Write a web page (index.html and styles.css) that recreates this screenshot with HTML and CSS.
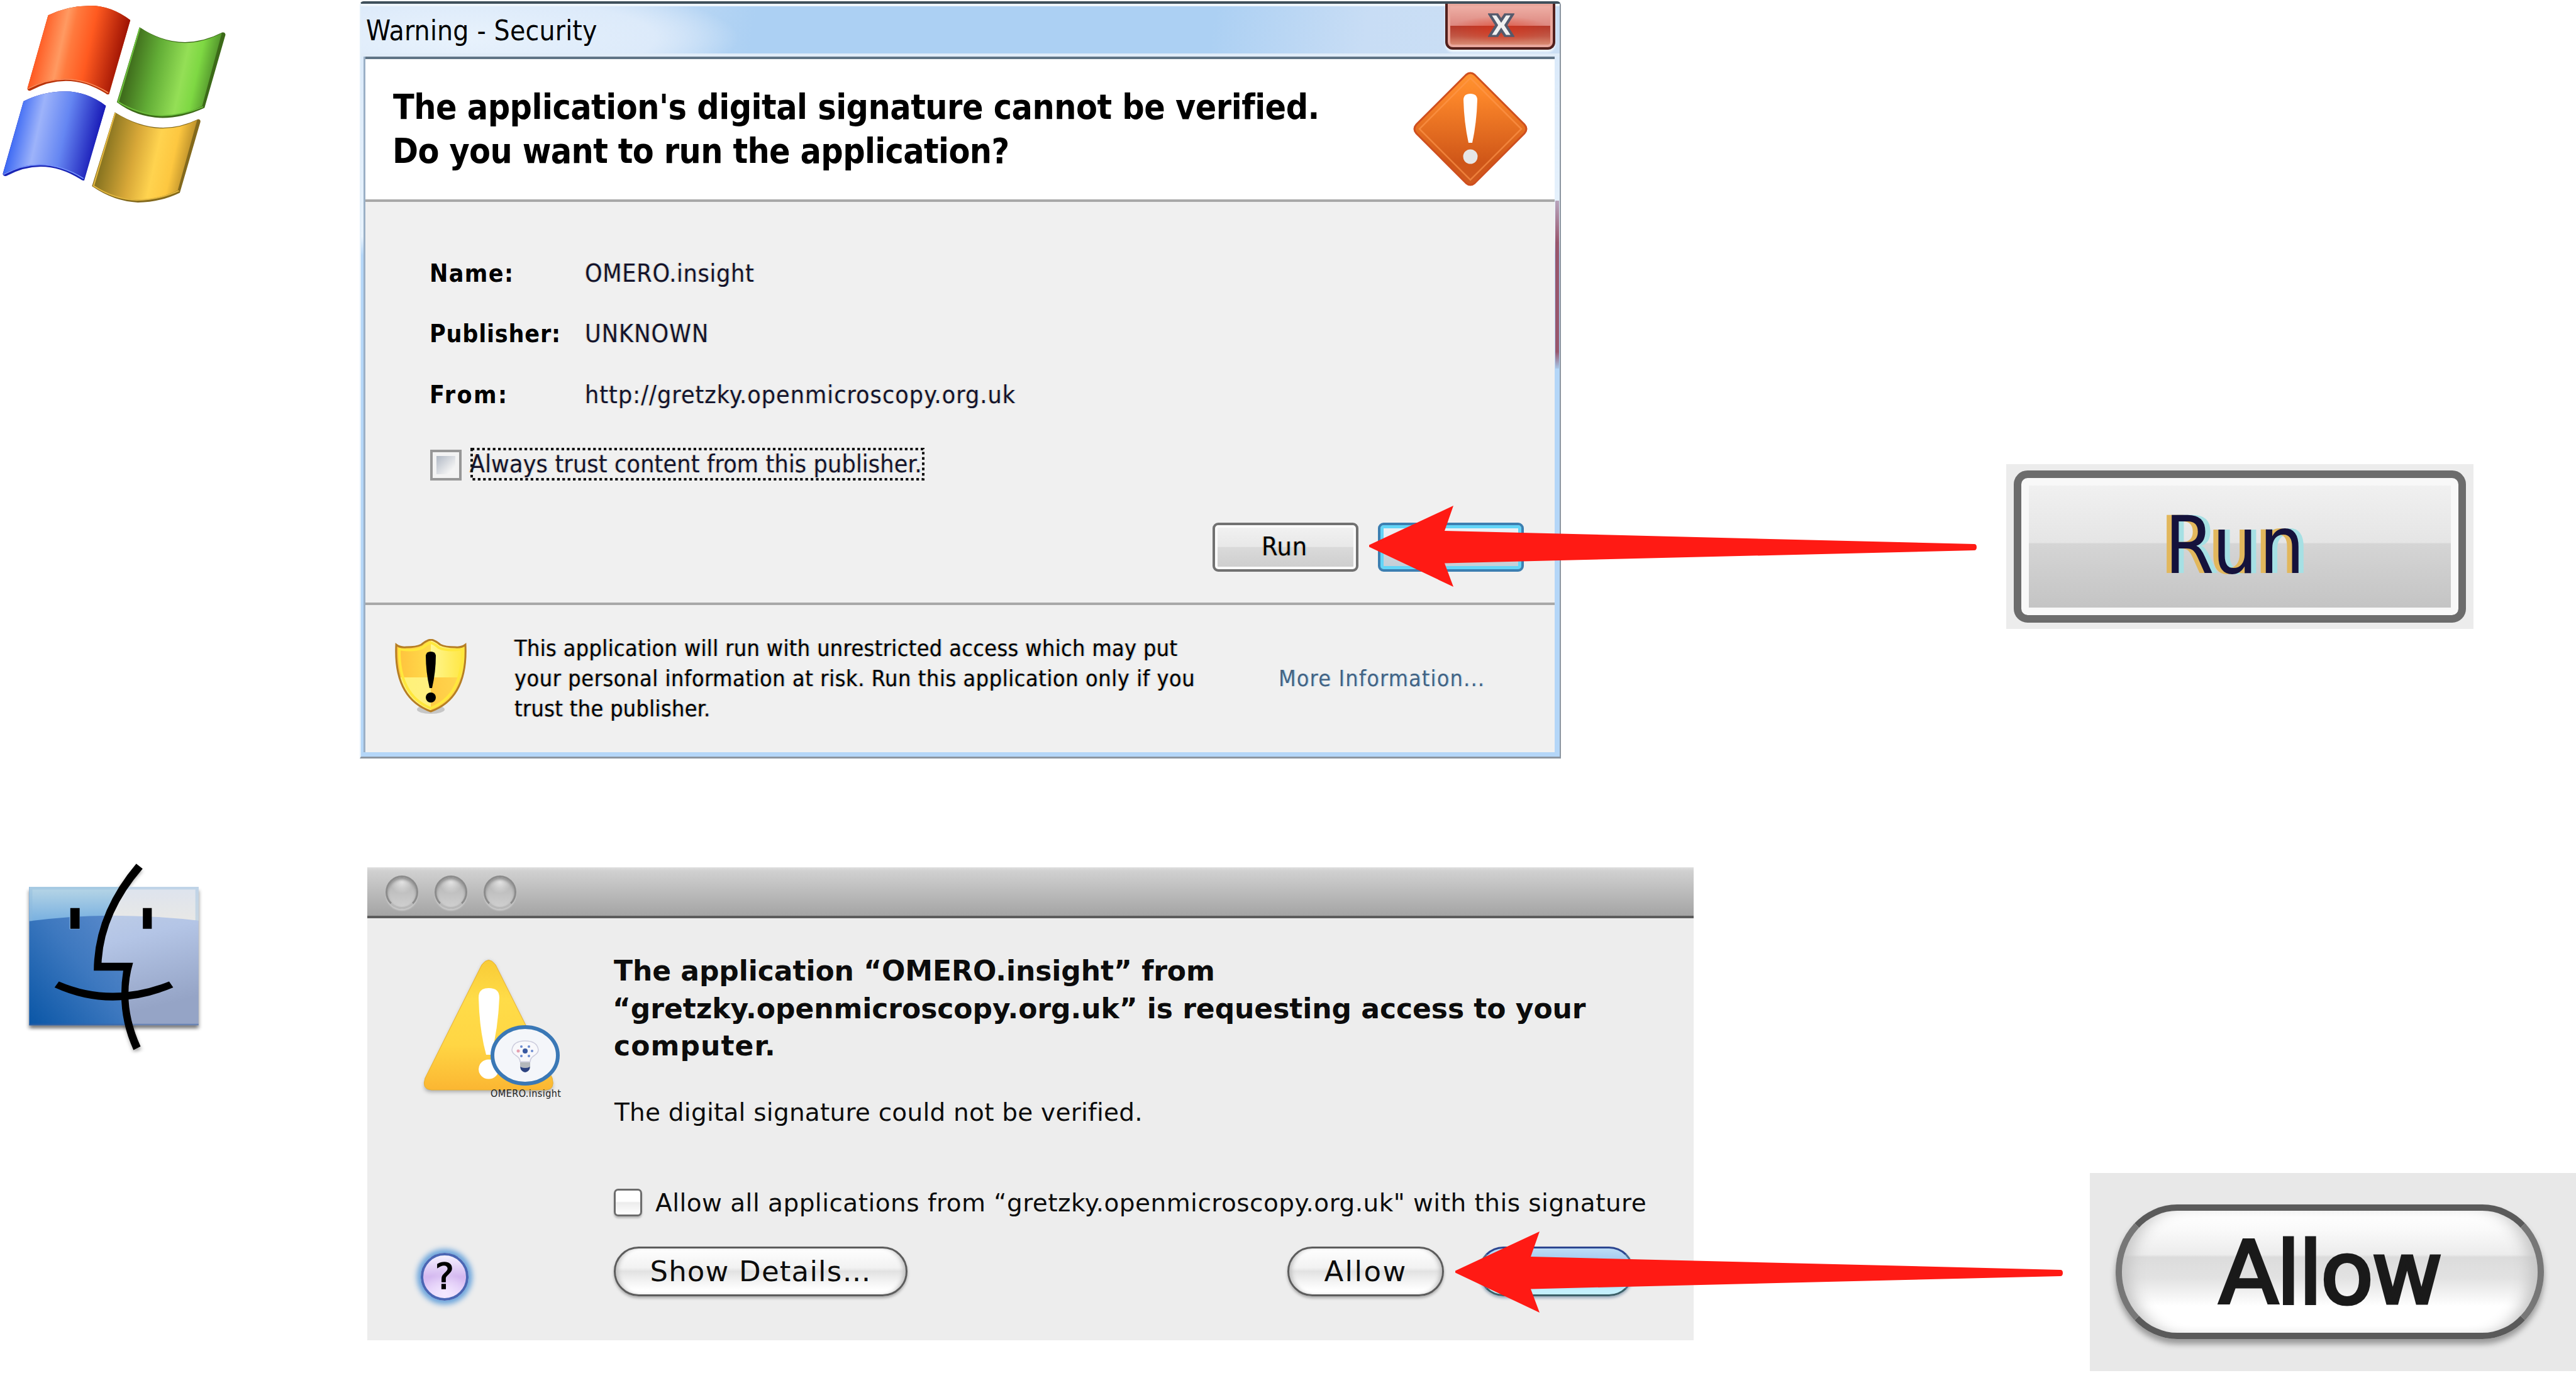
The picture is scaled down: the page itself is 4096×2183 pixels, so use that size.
FILE: index.html
```html
<!DOCTYPE html>
<html lang="en">
<head>
<meta charset="utf-8">
<title>Security warnings</title>
<link rel="stylesheet" href="styles.css">
</head>
<body>
<section class="platform platform-win">
  <svg class="logo-win" viewBox="0 0 1568 1200" preserveAspectRatio="none">
    <defs>
      <linearGradient id="red" gradientUnits="userSpaceOnUse" x1="165" y1="250" x2="530" y2="315">
        <stop offset="0" stop-color="#ff5a22"/><stop offset=".27" stop-color="#ff9a62"/><stop offset=".38" stop-color="#ff7a3e"/><stop offset=".6" stop-color="#ff5a20"/><stop offset="1" stop-color="#a01404"/>
      </linearGradient>
      <linearGradient id="green" gradientUnits="userSpaceOnUse" x1="565" y1="350" x2="945" y2="418">
        <stop offset="0" stop-color="#3f6d1c"/><stop offset=".3" stop-color="#62ad36"/><stop offset=".62" stop-color="#94df56"/><stop offset=".78" stop-color="#7ed843"/><stop offset="1" stop-color="#4b8a28"/>
      </linearGradient>
      <linearGradient id="blue" gradientUnits="userSpaceOnUse" x1="55" y1="700" x2="425" y2="766">
        <stop offset="0" stop-color="#3b68f4"/><stop offset=".29" stop-color="#9db3fa"/><stop offset=".6" stop-color="#6586f2"/><stop offset="1" stop-color="#1a1cb8"/>
      </linearGradient>
      <linearGradient id="gold" gradientUnits="userSpaceOnUse" x1="455" y1="800" x2="835" y2="868">
        <stop offset="0" stop-color="#887420"/><stop offset=".35" stop-color="#d8a838"/><stop offset=".6" stop-color="#ffd34f"/><stop offset=".8" stop-color="#fdc740"/><stop offset="1" stop-color="#b58a28"/>
      </linearGradient>
    </defs>
    <path d="M211 82Q295 32 385 31Q480 25 571 108L478 505Q470 510 462 500Q300 375 132 486Q120 488 120 474Z" fill="#b83208"/>
    <path d="M211 82Q295 32 385 31Q480 25 571 108L478 496Q300 362 120 474Z" fill="url(#red)" />
    <path d="M122 476Q300 364 474 497" fill="none" stroke="#ff8e5c" stroke-width="5"/>
    <path d="M611 146Q790 290 974 174Q986 170 988 186L896 578Q800 632 712 632Q600 630 512 548Z" fill="#3c6a18"/>
    <path d="M617 150Q790 295 972 177L886 568Q800 620 712 620Q610 615 520 540Z" fill="url(#green)"/>
    <path d="M613 150L518 546Q610 615 712 620Q800 618 890 572" fill="none" stroke="#6cbf3c" stroke-width="6"/>
    <path d="M103 543Q190 490 285 490Q380 490 464 567L369 967Q362 970 352 960Q190 835 28 943Q14 946 12 932Z" fill="#1a25b4"/>
    <path d="M103 543Q190 490 285 490Q380 490 464 567L369 955Q190 820 13 932Z" fill="url(#blue)"/>
    <path d="M15 935Q190 822 366 957" fill="none" stroke="#7a98ff" stroke-width="5"/>
    <path d="M503 602Q690 745 868 639Q880 640 878 654L788 1033Q700 1085 604 1085Q500 1080 403 998Z" fill="#83691c"/>
    <path d="M509 607Q690 750 864 643L779 1020Q700 1068 600 1071Q500 1068 412 992Z" fill="url(#gold)"/>
    <path d="M505 606L410 996Q500 1068 600 1073Q700 1070 784 1022" fill="none" stroke="#e2b740" stroke-width="6"/>
  </svg>

  <div class="win-dialog">
    <header class="win-title"><span>Warning - Security</span>
      <div class="win-close"><svg viewBox="0 0 46 60" preserveAspectRatio="none"><path d="M3 3H16L23 18L30 3H43L31 30L43 57H30L23 42L16 57H3L15 30Z" fill="#f0f0f0" stroke="#545a6c" stroke-width="5"/></svg></div>
    </header>
    <div class="win-client">
      <div class="win-head">
        <h1><span class="h-a">The application's digital signature cannot be verified.</span><br><span class="h-b">Do you want to run the application?</span></h1>
        <svg class="diamond" viewBox="0 0 180 180">
          <defs><linearGradient id="or" x2="0" y2="1"><stop offset="0" stop-color="#ff9430"/><stop offset=".2" stop-color="#fb862a"/><stop offset=".8" stop-color="#cf5618"/><stop offset="1" stop-color="#d05a20"/></linearGradient></defs>
          <path d="M83 4Q90-2 97 4L176 83Q182 90 176 97L97 176Q90 182 83 176L4 97Q-2 90 4 83Z" fill="url(#or)" stroke="#cf4f1e" stroke-width="3"/>
          <path d="M90 9L171 90L90 171L9 90Z" fill="none" stroke="#ff9a50" stroke-opacity=".6" stroke-width="2.5"/>
          <path d="M79 44Q79 34 90 34Q101 34 101 44Q100 80 93 112H87Q80 80 79 44Z" fill="#fff"/>
          <circle cx="90" cy="134" r="11.500" fill="#e6e6e6"/>
        </svg>
      </div>
      <div class="win-body">
        <dl>
          <dt class="t-name">Name:</dt><dd class="t-omero">OMERO.insight</dd>
          <dt class="t-pub">Publisher:</dt><dd class="t-unk">UNKNOWN</dd>
          <dt class="t-from">From:</dt><dd class="t-url">http://gretzky.openmicroscopy.org.uk</dd>
        </dl>
        <div class="win-trust"><i class="win-check"></i><span class="focus">Always trust content from this publisher.
          <svg viewBox="0 0 722 52"><rect x="2" y="2" width="718" height="48" fill="none" stroke="#111" stroke-width="4" stroke-dasharray="4.200 4.200"/></svg></span></div>
        <div class="win-buttons"><div class="win-btn">Run</div><div class="win-btn win-default"></div></div>
      </div>
      <div class="win-foot">
        <svg class="shield" viewBox="0 0 114 120">
          <defs><linearGradient id="sh" x2="1"><stop offset="0" stop-color="#ffc03c"/><stop offset=".5" stop-color="#ffdc4c"/><stop offset=".5" stop-color="#fff690"/><stop offset="1" stop-color="#ffe53c"/></linearGradient>
          <linearGradient id="sl" x2="1"><stop offset="0" stop-color="#fff276"/><stop offset=".5" stop-color="#fff080"/><stop offset=".5" stop-color="#ffca44"/><stop offset="1" stop-color="#ffd850"/></linearGradient>
          <clipPath id="sc"><path d="M2 9Q8 14 18 13Q34 13 42 9Q50 2 57 1Q64 2 72 9Q80 13 96 13Q106 14 112 9Q116 94 57 115Q-2 94 2 9Z"/></clipPath></defs>
          <ellipse cx="57" cy="112" rx="22" ry="7" fill="#aaa" opacity=".6"/>
          <g clip-path="url(#sc)"><path d="M0 0H114V61H0Z" fill="url(#sh)"/><path d="M0 61H114V120H0Z" fill="url(#sl)"/></g>
          <path d="M7 16Q30 20 44 14Q52 7 57 6Q62 7 70 14Q84 20 107 16Q108 90 57 110Q6 90 7 16Z" fill="none" stroke="#ffe83c" stroke-width="4"/>
          <path d="M2 9Q8 14 18 13Q34 13 42 9Q50 2 57 1Q64 2 72 9Q80 13 96 13Q106 14 112 9Q116 94 57 115Q-2 94 2 9Z" fill="none" stroke="#b67e24" stroke-width="3"/>
          <path d="M49 26Q50 20 57 20Q64 20 65 26Q65 52 59 78H55Q49 52 49 26Z"/><circle cx="57" cy="93" r="8"/>
        </svg>
        <p><span class="f-a">This application will run with unrestricted access which may put</span><br><span class="f-b">your personal information at risk. Run this application only if you</span><br><span class="f-c">trust the publisher.</span></p>
        <a>More Information...</a>
      </div>
    </div>
  </div>

  <div class="zoom-run"><div class="big-btn">Run</div></div>
  <svg class="arrow arrow-run" viewBox="0 0 968 130"><path d="M134 0L120 40L962 61Q966 61 966 66Q966 71 962 71L120 91.500L134 129L0 65.500V62.500Z" fill="#ff1a14"/></svg>
</section>

<section class="platform platform-mac">
  <svg class="logo-mac" viewBox="0 0 1568 1260" preserveAspectRatio="none">
    <defs>
      <linearGradient id="fl" x1=".9" y1="0" x2="0" y2="1"><stop offset="0" stop-color="#6490cf"/><stop offset=".5" stop-color="#3d78bf"/><stop offset="1" stop-color="#0a56a6"/></linearGradient>
      <linearGradient id="fr" x1="0" y1="0" x2=".3" y2="1"><stop offset="0" stop-color="#c8d6e8"/><stop offset=".5" stop-color="#b4c5e6"/><stop offset="1" stop-color="#95a4c6"/></linearGradient>
      <linearGradient id="gl" x2="0" y2="1"><stop offset="0" stop-color="#b8d6e6"/><stop offset="1" stop-color="#78b0e0"/></linearGradient>
      <linearGradient id="gr" x2="0" y2="1"><stop offset="0" stop-color="#dde3ee"/><stop offset="1" stop-color="#e8e8e6"/></linearGradient>
      <filter id="sb" x="-20%" y="-20%" width="140%" height="140%"><feGaussianBlur stdDeviation="9"/></filter>
    </defs>
    <path d="M128 275H870V1015H128Z" fill="#000" opacity=".5" filter="url(#sb)"/>
    <path d="M610 162Q430 390 430 684H562Q520 900 602 1135" fill="none" stroke="#000" stroke-opacity=".35" stroke-width="34" filter="url(#sb)"/>
    <path d="M128 256H870V998H128Z" fill="url(#fr)"/>
    <path d="M128 256H540Q430 440 430 684H562Q535 840 552 998H128Z" fill="url(#fl)"/>
    <path d="M540 256H870V437Q680 410 470 410Z" fill="url(#gr)"/>
    <path d="M128 256H540L480 410Q300 412 128 440Z" fill="url(#gl)"/>
    <path d="M135 440V263H863V437" fill="none" stroke="#8ab8dc" stroke-opacity=".35" stroke-width="14"/>
    <path d="M128 994H870" stroke="#3f64a0" stroke-opacity=".5" stroke-width="8"/>
    <path d="M305 370H350V483H305Z" fill="#8fc0f0"/><path d="M308 370H349V481H308ZM626 370H665V481H626Z"/>
    <path d="M597 132L625 159Q455 400 445 663H583Q530 880 616 1111L585 1130Q510 930 540 705H411Q412 400 597 132Z"/>
    <path d="M258 763Q490 885 741 763L759 795Q490 935 239 795Z"/>
  </svg>

  <div class="mac-dialog">
    <header class="mac-title"><i></i><i></i><i></i></header>
    <div class="mac-body">
      <div class="mac-side">
        <svg class="warn" viewBox="0 0 245 240">
          <defs><linearGradient id="tr" x2="0" y2="1"><stop offset="0" stop-color="#f8cb36"/><stop offset=".3" stop-color="#ffdc48"/><stop offset=".65" stop-color="#ffd644"/><stop offset="1" stop-color="#fbb632"/></linearGradient>
          <filter id="ts"><feGaussianBlur stdDeviation="3"/></filter></defs>
          <path d="M109 20Q119 4 129 20L219 202Q225 220 210 220H28Q12 220 19 202Z" fill="#777" opacity=".6" filter="url(#ts)"/>
          <path d="M108 18Q119 3 130 18L220 198Q225 216 210 217H28Q12 216 18 198Z" fill="url(#tr)" stroke="#e8b030" stroke-width="1"/>
          <path d="M103 70Q103 55 119 55Q136 55 136 70Q134 120 123 161H115Q104 120 103 70Z" fill="#fff"/><ellipse cx="119" cy="184" rx="16" ry="15.500" fill="#fff"/>
          <ellipse cx="177" cy="162" rx="52" ry="45" fill="#f4f6fa" stroke="#3a78b6" stroke-width="6"/>
          <path d="M169 172Q169 166 162 162Q156 158 156 153Q158 139 177 139Q196 139 198 153Q198 158 192 162Q185 166 185 172Z" fill="#f8f8fb" stroke="#ccd" stroke-width="1.500"/>
          <path d="M169 173H185V180Q177 184 169 180Z" fill="#b4b8bc"/><path d="M169 180Q177 184 185 180Q184 188 177 189Q170 188 169 180Z" fill="#2d4380"/>
          <circle cx="177" cy="155" r="4" fill="#3858a0"/><g fill="#6c8cd0"><circle cx="171" cy="148" r="2"/><circle cx="183" cy="148" r="2"/><circle cx="188" cy="155" r="2"/><circle cx="171" cy="163" r="2"/><circle cx="183" cy="163" r="2"/></g><circle cx="166" cy="155" r="2.500" fill="#e6a0b0"/>
          <text x="122" y="228" textLength="112" lengthAdjust="spacing" class="warn-label">OMERO.insight</text>
        </svg>
        <div class="help">?</div>
      </div>
      <div class="mac-main">
        <h2><span class="m-a">The application “OMERO.insight” from</span><br><span class="m-b">“gretzky.openmicroscopy.org.uk” is requesting access to your</span><br><span class="m-c">computer.</span></h2>
        <p>The digital signature could not be verified.</p>
        <div class="mac-allow"><i></i><span>Allow all applications from “gretzky.openmicroscopy.org.uk" with this signature</span></div>
        <div class="mac-buttons"><div class="mac-btn details">Show Details…</div><div class="mac-btn allow">Allow</div><div class="mac-btn deny">Deny</div></div>
      </div>
    </div>
  </div>

  <div class="zoom-allow"><div class="big-pill">Allow</div></div>
  <svg class="arrow arrow-allow" viewBox="0 0 968 130"><path d="M134 0L120 40L962 61Q966 61 966 66Q966 71 962 71L120 91.500L134 129L0 65.500V62.500Z" fill="#ff1a14"/></svg>
</section>
</body>
</html>
```
FILE: styles.css
```css
* { box-sizing: border-box; }
body { margin: 0; width: 4096px; height: 2183px; overflow: hidden; background: #fff; color: #000; }
h1, h2, p, dl, dd { margin: 0; }
.platform { position: relative; display: flex; align-items: flex-start; }
.platform-win { height: 1334px; font-family: "DejaVu Sans Condensed", "DejaVu Sans", sans-serif; font-stretch: condensed; }
.platform-mac { height: 849px; font-family: "DejaVu Sans", sans-serif; }
.logo-win { width: 569px; height: 356px; flex: none; }
.logo-mac { width: 569px; height: 374px; flex: none; }
.arrow { position: absolute; width: 968px; height: 130px; }
.arrow-run { left: 2177px; top: 804px; }
.arrow-allow { left: 2314px; top: 624px; }

/* Windows dialog */
.win-dialog { flex: none; width: 1910px; height: 1204px; margin: 2px 0 0 3px; padding: 0 7px 7px 6px; display: flex; flex-direction: column; border: 2px solid #8b95a0; border-top: 4px solid #3f505c; border-bottom-width: 3px; border-left-color: #e4f0fa;
  border-radius: 6px 6px 0 0; background: linear-gradient(#cfe2f6 0, #dbeafa 80px, #e8f3fd 370px, #b4d6f8 400px, #b4d6f8 100%); }
.win-title { position: relative; height: 84px; margin: 0 -7px 0 -6px; flex: none; border-bottom: 5px solid #e0ecf8; border-top: 4px solid #eef5fb;
  background: radial-gradient(ellipse 440px 90px at 160px 50px, #e8f2fc 0, #dceafa 70%, transparent 100%), linear-gradient(100deg, #cfe3f7 0, #c6ddf5 400px, #acd0f3 620px, #acd0f3 1340px, #c8ddf5 1580px, #cbdff4 100%); }
.win-title span { display: block; padding-left: 8px; font-size: 44px; line-height: 82px; margin-top: -2px; letter-spacing: .180px; white-space: nowrap; }
.win-close { position: absolute; right: 7px; top: -4px; width: 175px; height: 73px; border: 4px solid #52201c; border-top: 0; border-radius: 0 0 12px 12px; box-shadow: inset 0 0 0 4px #e9a79c, 0 4px 3px #edf5fc; display: flex; justify-content: center; padding: 15px 0 0 3px;
  background: radial-gradient(ellipse 80px 22px at 50% 60%, rgba(225,50,20,.6), transparent), linear-gradient(#f0b4aa 0, #dd8880 50%, #b43a2c 51%, #c25846 75%, #e09a80 100%); }
.win-close svg { width: 42px; height: 38px; }
.win-client { flex: 1; width: 1891px; margin-left: 1px; border-top: 4px solid #5f7486; box-shadow: -3px 0 #9bb0c6; display: flex; flex-direction: column; background: #f0f0f0; position: relative; }
.win-client::after { content: ""; position: absolute; right: -7px; top: 225px; width: 6px; height: 267px; background: linear-gradient(#b8a4bc, #98566c 25%, #98566c 90%, #a8c8e8); }
.win-head { height: 223px; flex: none; background: #fff; padding: 41px 44px 0; display: flex; justify-content: space-between; }
.win-head h1 { font-size: 55px; line-height: 70.400px; font-weight: bold; white-space: nowrap; }
.h-a { letter-spacing: -.500px; }
.h-b { letter-spacing: -.620px; margin-left: -1px; }
.diamond { width: 180px; height: 180px; margin-top: -20px; overflow: visible; }
.win-body { height: 641px; flex: none; border-top: 4px solid #a8a8a8; padding: 66px 49px 0 102px; font-size: 39px; }
.win-body dl { display: grid; grid-template-columns: 247px 1fr; grid-auto-rows: 96.300px; line-height: 96.300px; white-space: nowrap; }
.win-body dt { font-weight: bold; }
.win-body dd, .focus { color: #14142c; text-shadow: -1.500px 0 rgba(240,160,70,.4), 1.500px 0 rgba(90,180,240,.35); }
.t-name { letter-spacing: 1.400px; } .t-pub { letter-spacing: .800px; } .t-from { letter-spacing: 2.380px; }
.t-omero { letter-spacing: .740px; } .t-unk { letter-spacing: 1.090px; } .t-url { letter-spacing: 1.060px; }
.win-trust { display: flex; align-items: flex-start; margin-top: 36px; height: 52px; }
.win-check { width: 50px; height: 49px; margin: 3px 13px 0 1px; border: 4px solid #979797; background: linear-gradient(135deg, #b0b8c4, #f4f4f4 80%) content-box, #f3f3f3; padding: 6px; }
.focus { position: relative; width: 724px; line-height: 52px; letter-spacing: .180px; white-space: nowrap; }
.focus svg { position: absolute; left: 0; top: 0; width: 724px; height: 52px; }
.win-buttons { display: flex; justify-content: flex-end; gap: 31px; margin-top: 67px; }
.win-btn { width: 232px; height: 78px; border: 4px solid #717171; border-radius: 9px; box-shadow: inset 0 0 0 4px #fafafa; background: linear-gradient(#f2f2f2, #e8e8e8 49%, #dadada 50%, #cdcdcd); line-height: 68px; text-align: center; font-size: 41px; letter-spacing: .800px; padding-right: 3px; text-shadow: -1.500px 0 rgba(240,160,70,.5), 1.500px 0 rgba(90,180,240,.5); }
.win-default { border-color: #3c7fb1; box-shadow: inset 0 0 0 5px #63d5f7; background: linear-gradient(#eef2f6, #e2e8ee 49%, #ccd6de 50%, #c4ced6); }
.win-foot { flex: 1; border-top: 4px solid #a8a8a8; display: flex; align-items: flex-start; font-size: 35.500px; line-height: 48px; white-space: nowrap; padding-left: 47px; }
.shield { width: 114px; height: 120px; margin-top: 54px; flex: none; }
.win-foot p { width: 1215px; margin: 45px 0 0 76px; flex: none; text-shadow: -1.500px 0 rgba(240,160,70,.5), 1.500px 0 rgba(60,150,230,.5); }
.f-a { letter-spacing: .480px; } .f-b { letter-spacing: .680px; } .f-c { letter-spacing: .440px; }
.win-foot a { margin-top: 93px; color: #446382; letter-spacing: 1.250px; text-shadow: 1.500px 0 rgba(90,180,240,.4); }

/* Enlarged Run button */
.zoom-run { flex: none; width: 743px; height: 262px; margin: 738px 0 0 708px; padding: 10px 12px; background: #ececec; }
.big-btn { height: 242px; border: 12px solid #6c6c6c; border-radius: 22px; box-shadow: inset 0 0 0 12px #f8f8f8; background: linear-gradient(#f2f2f2, #e5e5e5 47%, #d5d5d5 48%, #c2c2c2); text-align: center; font-size: 126px; line-height: 215px; letter-spacing: 2.800px; padding-right: 14px; font-family: "DejaVu Sans", sans-serif; color: #15123c; text-shadow: -8px 0 #e2b75c, 8px 0 #a6e0e4; }

/* Mac dialog */
.mac-dialog { flex: none; width: 2109px; height: 752px; margin: 45px 0 0 15px; background: #ededed; }
.mac-title { height: 81px; border-bottom: 4px solid #5c5c5c; background: linear-gradient(#dedede 0, #d0d0d0 6px, #a4a4a4 100%); padding: 13px 0 0 29px; display: flex; gap: 26px; }
.mac-title i { width: 52px; height: 53px; border-radius: 50%; border: 3px solid #8c8c8c; border-bottom-color: #b8b8b8; background: radial-gradient(circle at 50% 15%, #e4e4e4, transparent 40%), linear-gradient(#b2b2b2, #cfcfcf); box-shadow: 0 3px 2px #c8c8c8, inset 0 3px 4px #8f8f8f; }
.mac-body { display: flex; }
.mac-side { width: 392px; flex: none; padding: 56px 0 0 74px; }
.warn { display: block; width: 245px; height: 240px; overflow: visible; }
.warn-label { font: 16px "DejaVu Sans Condensed", sans-serif; fill: #222; }
.help { width: 76px; height: 76px; margin: 236px 0 0 11px; border-radius: 50%; border: 4px solid #4a66b4; background: radial-gradient(circle at 50% 90%, #f4e8ff, transparent 50%), linear-gradient(#f6f2ff, #d4b8f0 50%, #ecdcff); box-shadow: 0 0 8px 6px #6aa4dc; text-align: center; font-size: 57px; line-height: 68px; -webkit-text-stroke: 1.500px #000; }
.mac-main { width: 1716px; padding-top: 54px; white-space: nowrap; color: #0c0c0c; }
.mac-main h2 { font-size: 44px; line-height: 59.500px; }
.m-a { letter-spacing: -.060px; } .m-b { letter-spacing: -.050px; margin-left: -2px; } .m-c { letter-spacing: 1.090px; }
.mac-main p { margin-top: 51px; font-size: 39px; line-height: 50px; letter-spacing: .230px; padding-left: 1px; }
.mac-allow { display: flex; margin-top: 94px; font-size: 39px; line-height: 50px; letter-spacing: .460px; }
.mac-allow i { width: 45px; height: 44px; margin: 2px 21px 0 0; border: 3px solid #6c6c6c; border-radius: 7px; background: linear-gradient(#fff, #fff 45%, #ececec 50%, #fff); box-shadow: 0 3px 3px #bbb; }
.mac-buttons { display: flex; margin-top: 44px; }
.mac-btn { height: 79px; border: 3px solid #5c5c5c; border-radius: 40px; text-align: center; font-size: 45px; line-height: 73px; background: linear-gradient(#fff 0, #f2f2f2 42%, #e2e2e2 50%, #f2f2f2 70%, #fff 90%); box-shadow: 0 3px 4px #aaa, inset 7px 0 7px -4px #bbb, inset -7px 0 7px -4px #bbb; }
.details { width: 467px; letter-spacing: 1.190px; }
.allow { width: 249px; margin-left: 604px; letter-spacing: 2.420px; }
.deny { width: 247px; margin-left: 55px; border-color: #2c4590 #4a6c90 #3c6068; background: linear-gradient(#bcdcf6 0, #96c0ec 42%, #84b8ea 52%, #c4f0fc 92%); box-shadow: 0 3px 4px #9ab; }

/* Enlarged Allow button */
.zoom-allow { flex: none; width: 773px; height: 315px; margin: 531px 0 0 630px; padding: 50px 51px 0 41px; background: #e8e8e8; }
.big-pill { height: 214px; border: 10px solid #5a5a5a; border-left-color: #777; border-right-color: #777; border-radius: 98px / 107px; background: linear-gradient(#fff 0, #fafafa 15%, #ececec 36%, #dcdcdc 38%, #e2e2e2 55%, #fff 78%, #fff 100%); box-shadow: 0 8px 10px #999, inset 26px 0 24px -14px #c4c4c4, inset -26px 0 24px -14px #c4c4c4; text-align: center; font-size: 138px; line-height: 200px; letter-spacing: -3.200px; -webkit-text-stroke: 5px #1a1a1a; color: #1a1a1a; }
```
